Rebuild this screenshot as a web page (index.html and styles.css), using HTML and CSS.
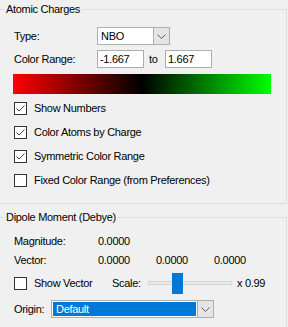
FILE: index.html
```html
<!DOCTYPE html>
<html lang="en">
<head>
<meta charset="UTF-8">
<title>Charges</title>
<link rel="stylesheet" href="styles.css">
</head>
<body>

<fieldset class="group charges">
    <legend>Atomic Charges</legend>
    <div class="row type-row">
        <span class="label">Type:</span>
        <div class="combo type-combo">
            <span class="combo-field">NBO</span>
            <span class="combo-btn"><svg width="9" height="5" viewBox="0 0 9 5"><polyline points="0.5,0.5 4.5,4.5 8.5,0.5" fill="none" stroke="#606060"/></svg></span>
        </div>
    </div>
    <div class="row range-row">
        <span class="label">Color Range:</span>
        <span class="input">-1.667</span>
        <span class="to">to</span>
        <span class="input">1.667</span>
    </div>
    <div class="gradient"></div>
    <div class="checks">
        <div class="check"><span class="box"><svg width="11" height="11" viewBox="0 0 11 11"><polyline points="1.5,5.5 4,8 9.5,2.5" fill="none" stroke="#444" stroke-width="1"/></svg></span>Show Numbers</div>
        <div class="check"><span class="box"><svg width="11" height="11" viewBox="0 0 11 11"><polyline points="1.5,5.5 4,8 9.5,2.5" fill="none" stroke="#444" stroke-width="1"/></svg></span>Color Atoms by Charge</div>
        <div class="check"><span class="box"><svg width="11" height="11" viewBox="0 0 11 11"><polyline points="1.5,5.5 4,8 9.5,2.5" fill="none" stroke="#444" stroke-width="1"/></svg></span>Symmetric Color Range</div>
        <div class="check"><span class="box"></span>Fixed Color Range (from Preferences)</div>
    </div>
</fieldset>

<fieldset class="group dipole">
    <legend>Dipole Moment (Debye)</legend>
    <div class="row value-row">
        <span class="label short">Magnitude:</span>
        <span class="value">0.0000</span>
    </div>
    <div class="row value-row">
        <span class="label short">Vector:</span>
        <span class="value">0.0000</span>
        <span class="value">0.0000</span>
        <span class="value">0.0000</span>
    </div>
    <div class="row vector-row">
        <div class="check"><span class="box"></span>Show Vector</div>
        <span class="scale-label">Scale:</span>
        <div class="slider">
            <div class="track"></div>
            <div class="thumb"></div>
        </div>
        <span class="scale-value">x 0.99</span>
    </div>
    <div class="row origin-row">
        <span class="origin-label">Origin:</span>
        <div class="combo origin-combo">
            <span class="combo-field"><span class="selected">Default</span></span>
            <span class="combo-btn"><svg width="9" height="5" viewBox="0 0 9 5"><polyline points="0.5,0.5 4.5,4.5 8.5,0.5" fill="none" stroke="#606060"/></svg></span>
        </div>
    </div>
</fieldset>

</body>
</html>
```

FILE: styles.css
```css
body {
    margin: 0;
    background-color: #f0f0f0;
    font-family: "Liberation Sans", Arial, sans-serif;
    font-size: 11px;
    letter-spacing: -0.3px;
    color: #000;
    overflow: hidden;
}

.group {
    margin: 1px 1px 0 -2px;
    padding: 0 0 11px 15px;
    border: 1px solid #dcdcdc;
}

.group legend {
    margin-left: -10px;
    padding: 0 2px;
    line-height: 16px;
}

.row {
    display: flex;
    align-items: center;
}

.label {
    width: 83px;
}

.type-row {
    height: 18px;
    margin-top: 10px;
}

.combo {
    display: flex;
    height: 18px;
    box-sizing: border-box;
    border: 1px solid #adadad;
    background: #fff;
}

.combo-field {
    flex: 1;
    display: flex;
    align-items: center;
    padding-left: 3px;
}

.combo-btn {
    width: 17px;
    box-sizing: border-box;
    border: 1px solid #adadad;
    margin: -1px -1px -1px 0;
    background: #e5e5e5;
    display: flex;
    align-items: center;
    justify-content: center;
}

.type-combo {
    width: 73px;
}

.range-row {
    height: 18px;
    margin-top: 5px;
}

.input {
    width: 47px;
    height: 18px;
    box-sizing: border-box;
    border: 1px solid #adadad;
    background: #fff;
    padding-left: 2px;
    line-height: 16px;
}

.to {
    width: 21px;
    padding-left: 5px;
    box-sizing: border-box;
}

.gradient {
    margin: 6px 0 0 -1px;
    width: 258px;
    height: 20px;
    background: linear-gradient(to right, #ff0000, #000000 50%, #00ff00);
}

.checks {
    margin-top: 2px;
}

.check {
    display: flex;
    align-items: center;
    height: 24px;
}

.box {
    width: 13px;
    height: 13px;
    box-sizing: border-box;
    border: 1px solid #333;
    background: #fff;
    margin-right: 7px;
    display: flex;
    align-items: center;
    justify-content: center;
}

.dipole {
    margin-top: 5px;
}

.value-row {
    height: 19px;
}

.value-row:first-of-type {
    margin-top: 6px;
}

.label.short {
    width: 84px;
}

.value {
    width: 58px;
}

.vector-row {
    height: 22px;
    margin-top: 3px;
}

.vector-row .check {
    width: 98px;
}

.scale-label {
    width: 36px;
}

.slider {
    position: relative;
    width: 84px;
    height: 21px;
    display: flex;
    align-items: center;
}

.track {
    width: 100%;
    height: 4px;
    box-sizing: border-box;
    background: #e7eaea;
    border: 1px solid #d6d6d6;
}

.thumb {
    position: absolute;
    left: 24px;
    top: 0;
    width: 11px;
    height: 21px;
    background: #0078d7;
}

.scale-value {
    margin-left: 5px;
}

.origin-row {
    height: 18px;
    margin-top: 6px;
}

.origin-label {
    width: 37px;
}

.origin-combo {
    width: 163px;
}

.origin-combo .combo-field {
    padding: 1px;
}

.selected {
    flex: 1;
    align-self: stretch;
    background: #0078d7;
    color: #fff;
    padding-left: 3px;
    display: flex;
    align-items: center;
}
```
